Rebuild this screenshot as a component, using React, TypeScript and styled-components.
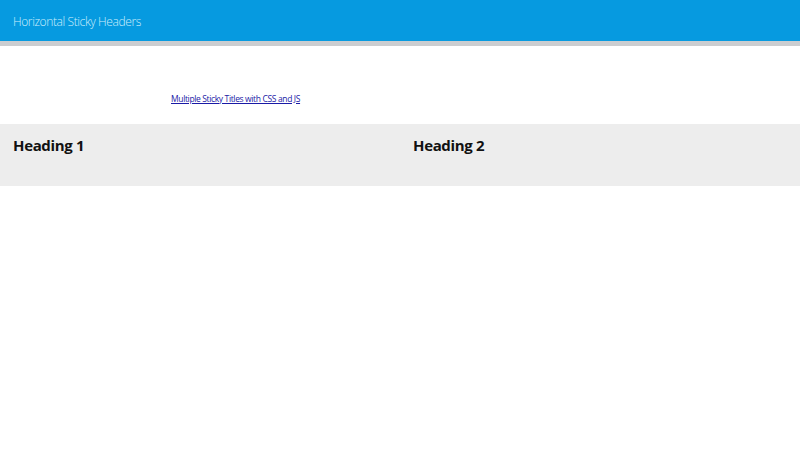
import React from "react";
import styled, { createGlobalStyle } from "styled-components";

const Global = createGlobalStyle`
  html, body { margin: 0; padding: 0; background: #fff; }
  body { font-family: "Open Sans", "Noto Sans", sans-serif; }
`;

const TopBar = styled.header`
  height: 41px;
  background: #069ae0;
  border-bottom: 5px solid #cbcdd0;
  display: flex;
  align-items: center;
  padding-left: 13px;
`;

const Title = styled.h1`
  margin: 0 0 0 0;
  padding-top: 2px;
  font-size: 12px;
  font-weight: 300;
  color: #cdeefc;
  letter-spacing: -0.4px;
`;

const Intro = styled.div`
  height: 78px;
  display: flex;
  align-items: center;
  padding-left: 171px;
  padding-top: 26px;
  box-sizing: border-box;
`;

const Link = styled.a`
  font-size: 8.5px;
  color: #1a1aa6;
  text-decoration: underline;
  letter-spacing: -0.36px;
`;

const Row = styled.section`
  display: grid;
  grid-template-columns: 1fr 1fr;
  background: #ededed;
  height: 62px;
`;

const Col = styled.div`
  padding: 11px 13px;
`;

const Heading = styled.h2`
  margin: 0;
  font-size: 15px;
  font-weight: 700;
  color: #111;
  letter-spacing: -0.35px;
`;

export default function App() {
  return (
    <>
      <Global />
      <TopBar>
        <Title>Horizontal Sticky Headers</Title>
      </TopBar>
      <Intro>
        <Link href="#">Multiple Sticky Titles with CSS and JS</Link>
      </Intro>
      <Row>
        <Col>
          <Heading>Heading 1</Heading>
        </Col>
        <Col>
          <Heading>Heading 2</Heading>
        </Col>
      </Row>
    </>
  );
}
